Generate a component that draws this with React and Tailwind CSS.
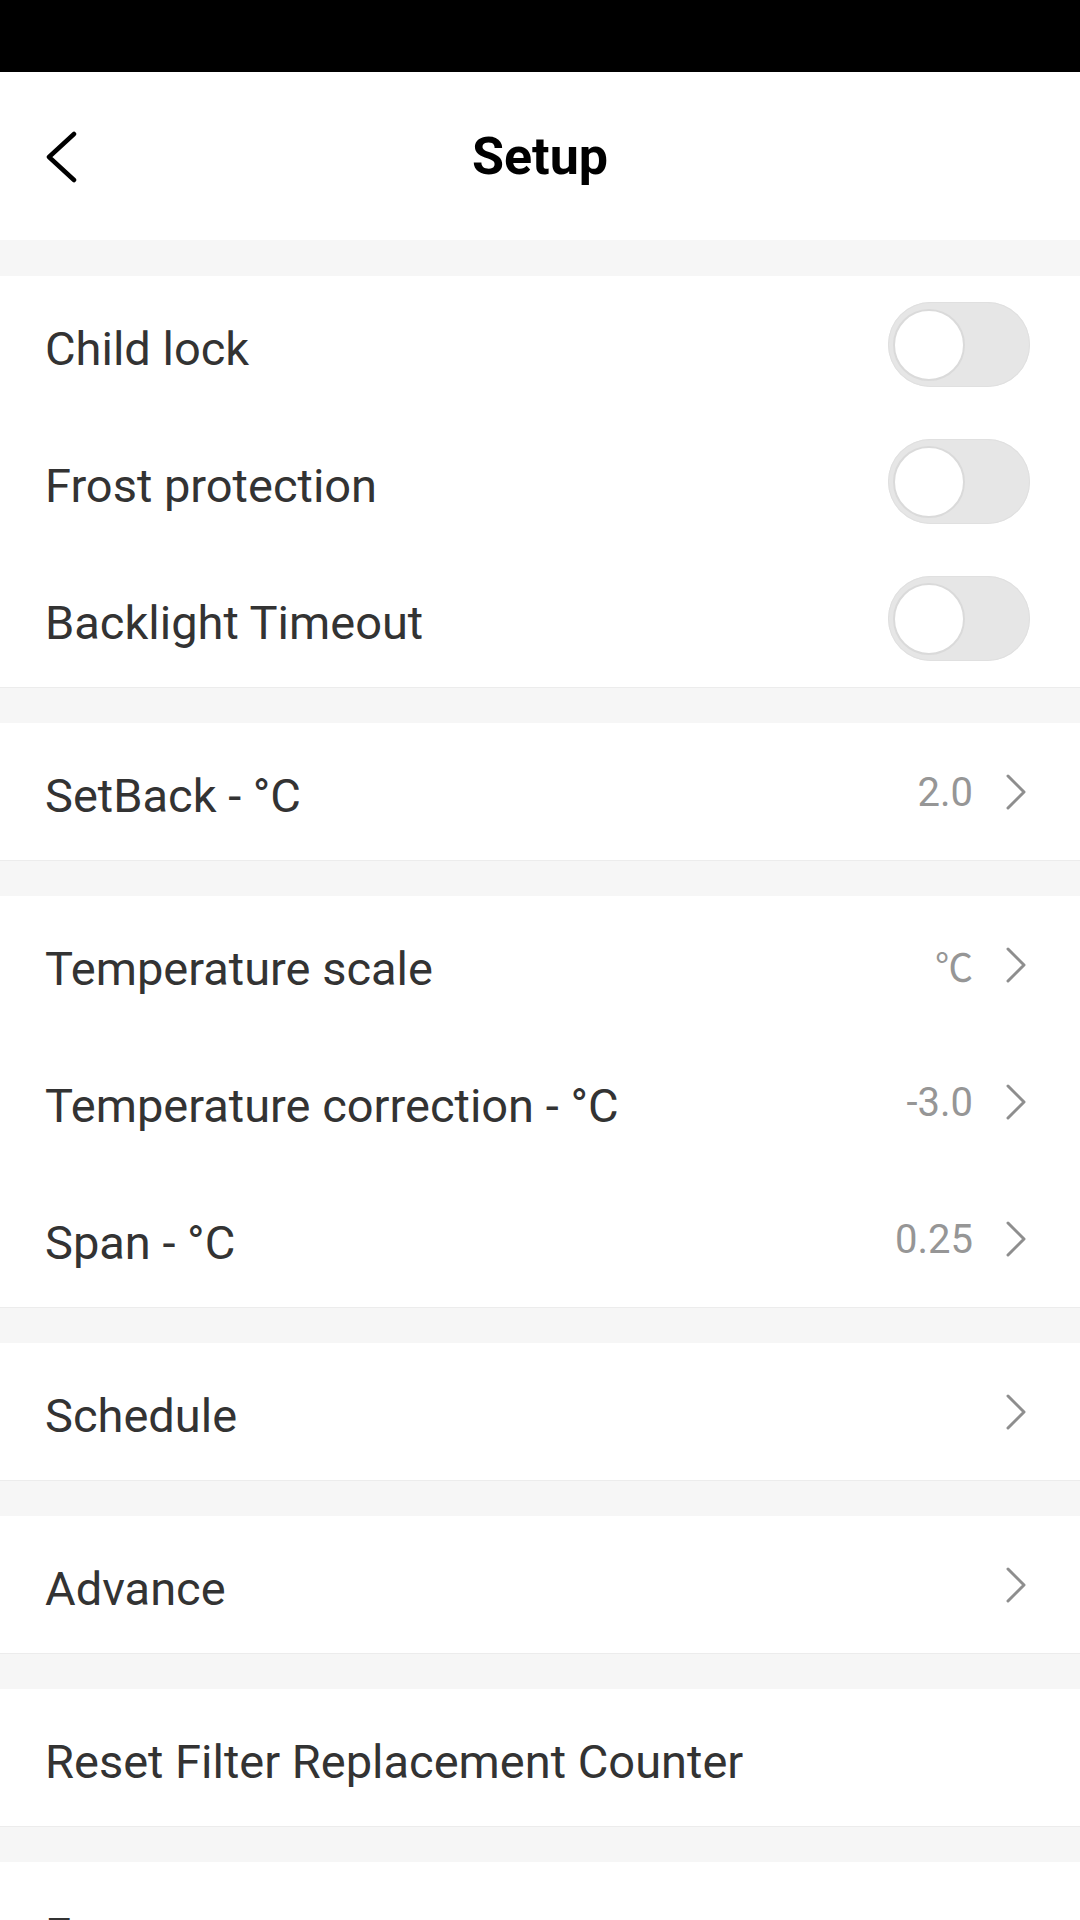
import React from "react";

function Chevron() {
  return (
    <svg width="24" height="38" viewBox="0 0 24 38" className="block">
      <path d="M4 3 L20 19 L4 35" fill="none" stroke="#8e8e8e" strokeWidth="3" strokeLinecap="round" strokeLinejoin="round" />
    </svg>
  );
}

function Toggle() {
  return (
    <div className="w-[142px] h-[85px] rounded-full bg-[#e6e6e6] flex items-center pl-[5px] shadow-[inset_0_0_0_1px_#e0e0e0]">
      <div className="w-[72px] h-[72px] rounded-full bg-white border-2 border-[#dadada]" />
    </div>
  );
}

function Row({ label, value, valueCjk, toggle, chevron }) {
  return (
    <div className="h-[137px] flex items-center justify-between pl-[45px] pr-[50px]">
      <span className="mt-[7px] text-[47px] text-[#333333] leading-none">{label}</span>
      {toggle && <Toggle />}
      {chevron && (
        <div className="flex items-center gap-[31px] mr-[2px]">
          {value && <span className="mt-[2px] text-[40px] text-[#969696] leading-none">{value}</span>}
          {valueCjk && (
            <span className="text-[38px] text-[#969696] leading-none font-['Noto_Sans_CJK_SC',sans-serif]">{valueCjk}</span>
          )}
          <Chevron />
        </div>
      )}
    </div>
  );
}

function Section({ children }) {
  return <div className="bg-white border-b border-[#ececec]">{children}</div>;
}

function Gap() {
  return <div className="h-[35px] bg-[#f6f6f6]" />;
}

export default function App() {
  return (
    <div className="w-[1080px] h-[1920px] overflow-hidden bg-[#f6f6f6] font-['Roboto',Arial,sans-serif]">
      <div className="h-[72px] bg-black" />
      <div className="h-[168px] bg-white relative flex items-center justify-center">
        <div className="absolute left-[44px] top-[59px]">
          <svg width="34" height="52" viewBox="0 0 34 52" className="block">
            <path d="M30 3 L5 26 L30 49" fill="none" stroke="#000" strokeWidth="4.5" strokeLinecap="round" strokeLinejoin="round" />
          </svg>
        </div>
        <span className="mt-[2px] text-[52px] font-bold text-black leading-none">Setup</span>
      </div>
      <div className="h-[36px] bg-[#f6f6f6]" />
      <Section>
        <Row label="Child lock" toggle />
        <Row label="Frost protection" toggle />
        <Row label="Backlight Timeout" toggle />
      </Section>
      <Gap />
      <Section>
        <Row label="SetBack - °C" value="2.0" chevron />
      </Section>
      <Gap />
      <Section>
        <Row label="Temperature scale" valueCjk="℃" chevron />
        <Row label="Temperature correction - °C" value="-3.0" chevron />
        <Row label="Span - °C" value="0.25" chevron />
      </Section>
      <Gap />
      <Section>
        <Row label="Schedule" chevron />
      </Section>
      <Gap />
      <Section>
        <Row label="Advance" chevron />
      </Section>
      <Gap />
      <Section>
        <Row label="Reset Filter Replacement Counter" />
      </Section>
      <Gap />
      <Section>
        <Row label="Factory reset" />
      </Section>
    </div>
  );
}
